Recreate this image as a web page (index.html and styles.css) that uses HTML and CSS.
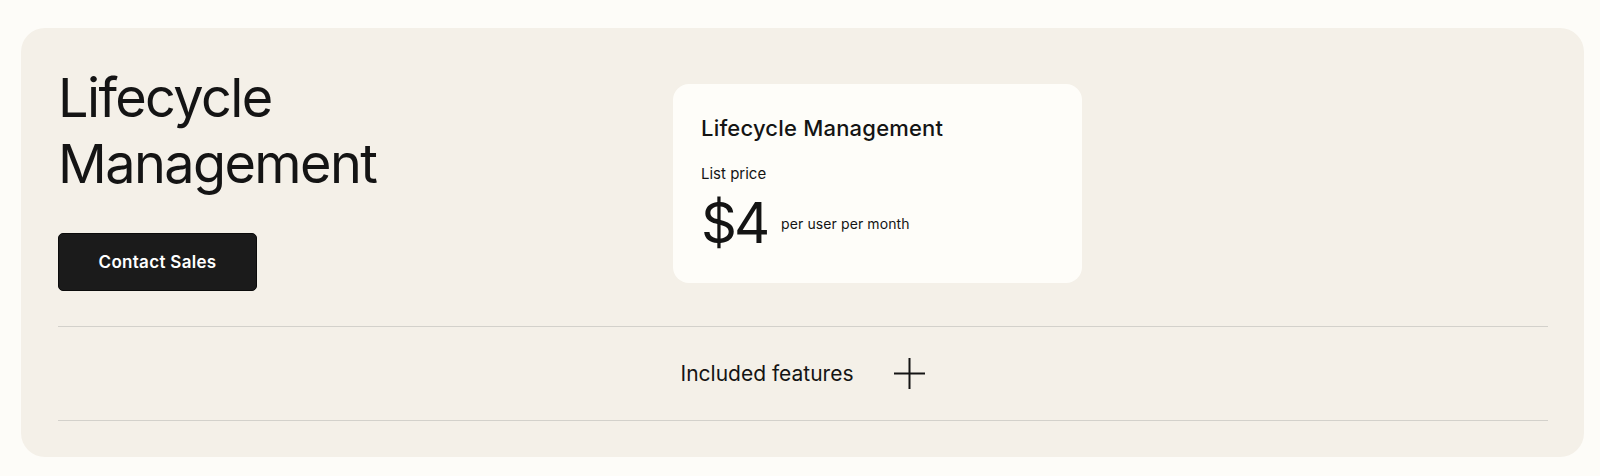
FILE: index.html
```html
<!DOCTYPE html>
<html lang="en">
<head>
<meta charset="utf-8">
<title>Lifecycle Management</title>
<link rel="stylesheet" href="styles.css">
</head>
<body>
<section class="panel">
  <div class="top">
    <div class="intro">
      <h1 class="title">Lifecycle<br>Management</h1>
      <a class="btn" href="#">Contact Sales</a>
    </div>
    <div class="card">
      <h2 class="card-title">Lifecycle Management</h2>
      <div class="label">List price</div>
      <div class="price-row">
        <span class="price">$4</span>
        <span class="unit">per user per month</span>
      </div>
    </div>
  </div>
  <div class="features">
    <span class="features-text">Included features</span>
    <svg class="plus" width="31" height="31" viewBox="0 0 31 31" aria-hidden="true">
      <path d="M15.5 0V31M0 15.5H31" stroke="#141414" stroke-width="2" fill="none"/>
    </svg>
  </div>
</section>
</body>
</html>
```
FILE: styles.css
```css
html, body {
  margin: 0;
  padding: 0;
  background: #fdfcf8;
}
body {
  padding: 28px 16px 19px 21px;
  font-family: Inter, "Liberation Sans", Arial, sans-serif;
  color: #141414;
}
.panel {
  background: #f4f0e8;
  border-radius: 24px;
  padding: 37px 36px 36px 37px;
  height: 429px;
  box-sizing: border-box;
}
.top {
  display: flex;
  align-items: flex-start;
  height: 261px;
  border-bottom: 1px solid #d3d1cb;
}
.intro {
  width: 615px;
  flex: none;
}
.title {
  margin: 0;
  font-size: 54px;
  line-height: 66px;
  font-weight: 400;
  letter-spacing: -1.6px;
}
.btn {
  display: inline-flex;
  align-items: center;
  justify-content: center;
  margin-top: 36px;
  width: 199px;
  height: 58px;
  box-sizing: border-box;
  background: #1b1b1b;
  border: 1px solid #0b0b0b;
  border-radius: 5px;
  color: #fff;
  font-size: 17px;
  font-weight: 600;
  letter-spacing: 0.3px;
  text-decoration: none;
}
.card {
  margin-top: 19px;
  width: 409px;
  height: 199px;
  box-sizing: border-box;
  background: #fefdf9;
  border-radius: 16px;
  padding: 30px 28px;
}
.card-title {
  margin: 0;
  font-size: 22px;
  line-height: 28px;
  font-weight: 500;
  letter-spacing: 0.2px;
}
.label {
  margin-top: 22px;
  font-size: 15px;
  line-height: 20px;
}
.price-row {
  margin-top: 11px;
  display: flex;
  align-items: center;
  gap: 14px;
}
.price {
  font-size: 56px;
  line-height: 56px;
  letter-spacing: -3px;
}
.unit {
  font-size: 14px;
  letter-spacing: 0.1px;
}
.features {
  display: flex;
  align-items: center;
  justify-content: center;
  gap: 41px;
  height: 93px;
  border-bottom: 1px solid #d3d1cb;
}
.features-text {
  font-size: 21px;
}
.plus {
  display: block;
}
```
